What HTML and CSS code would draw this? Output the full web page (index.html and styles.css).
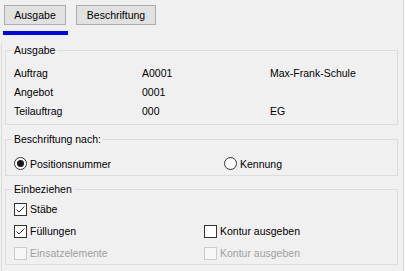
FILE: index.html
```html
<!DOCTYPE html>
<html lang="de">
<head>
<meta charset="utf-8">
<link rel="stylesheet" href="styles.css">
</head>
<body>
<div class="page">
  <div class="tabs">
    <button class="btn btn-ausgabe">Ausgabe</button>
    <button class="btn btn-beschr">Beschriftung</button>
  </div>
  <div class="active-bar"></div>
  <div class="panel">
    <fieldset class="group g1">
      <legend>Ausgabe</legend>
      <div class="grid3">
        <span>Auftrag</span><span>A0001</span><span>Max-Frank-Schule</span>
        <span>Angebot</span><span>0001</span><span></span>
        <span>Teilauftrag</span><span>000</span><span>EG</span>
      </div>
    </fieldset>
    <fieldset class="group g2">
      <legend>Beschriftung nach:</legend>
      <div class="grid2 radios">
        <label class="opt"><span class="radio checked"></span>Positionsnummer</label>
        <label class="opt"><span class="radio"></span>Kennung</label>
      </div>
    </fieldset>
    <fieldset class="group g3">
      <legend>Einbeziehen</legend>
      <div class="grid2b">
        <label class="opt"><span class="cb"><svg width="11" height="11" viewBox="0 0 11 11"><polyline points="1.5,5.5 4,8 9.5,2.5" fill="none" stroke="#333" stroke-width="1"/></svg></span>Stäbe</label>
        <span></span>
        <label class="opt"><span class="cb"><svg width="11" height="11" viewBox="0 0 11 11"><polyline points="1.5,5.5 4,8 9.5,2.5" fill="none" stroke="#333" stroke-width="1"/></svg></span>Füllungen</label>
        <label class="opt"><span class="cb"></span>Kontur ausgeben</label>
        <label class="opt disabled"><span class="cb"></span>Einsatzelemente</label>
        <label class="opt disabled"><span class="cb"></span>Kontur ausgeben</label>
      </div>
    </fieldset>
  </div>
</div>
</body>
</html>
```

FILE: styles.css
```css
html, body {
  margin: 0;
  padding: 0;
  background: #f0f0f0;
}
body {
  font-family: "Liberation Sans", Arial, sans-serif;
  font-size: 10.5px;
  color: #000;
}
.page {
  width: 403px;
  height: 271px;
  border-right: 1px solid #dcdcdc;
  overflow: hidden;
}
.tabs {
  display: flex;
  gap: 10px;
  padding: 5px 0 0 4px;
}
.btn {
  font: inherit;
  color: #000;
  background: #e1e1e1;
  border: 1px solid #adadad;
  height: 20px;
  padding: 0;
  margin: 0;
  line-height: 18px;
}
.btn-ausgabe { width: 62px; }
.btn-beschr { width: 80px; }
.active-bar {
  width: 65px;
  height: 4px;
  background: #0000ff;
  margin: 6px 0 0 3px;
}
.panel {
  margin-top: 8px;
  margin-left: 1px;
  border-left: 1px solid #dcdcdc;
  padding-top: 0;
  height: 240px;
}
.group {
  margin: 0 5px 0 3px;
  border: 1px solid #dcdcdc;
  padding: 0 8px;
  min-width: 0;
}
.group legend {
  padding: 0 2px;
  margin-left: -2px;
  line-height: 14px;
}
.g1 { margin-top: 0; padding-top: 6px; padding-bottom: 4px; }
.g2 { margin-top: 7px; padding-top: 8px; padding-bottom: 2px; }
.g3 { margin-top: 6px; padding-top: 2px; padding-bottom: 0; }
.grid3 {
  display: grid;
  grid-template-columns: 128px 128px auto;
  grid-auto-rows: 19px;
  align-items: center;
}
.grid2 {
  display: grid;
  grid-template-columns: 210px auto;
  grid-auto-rows: 19px;
  align-items: center;
}
.grid2b {
  display: grid;
  grid-template-columns: 190px auto;
  grid-auto-rows: 22px;
  align-items: center;
}
.opt {
  display: flex;
  align-items: center;
  gap: 3px;
}
.radio {
  width: 11px;
  height: 11px;
  border: 1px solid #333;
  border-radius: 50%;
  background: #fff;
  display: flex;
  align-items: center;
  justify-content: center;
}
.radio.checked::after {
  content: "";
  width: 7px;
  height: 7px;
  border-radius: 50%;
  background: #1a1a1a;
}
.cb {
  width: 11px;
  height: 11px;
  border: 1px solid #333;
  background: #fff;
  display: flex;
}
.cb svg { display: block; }
.disabled { color: #a0a0a0; }
.disabled .cb {
  border-color: #cccccc;
  background: #f7f7f7;
}
```
